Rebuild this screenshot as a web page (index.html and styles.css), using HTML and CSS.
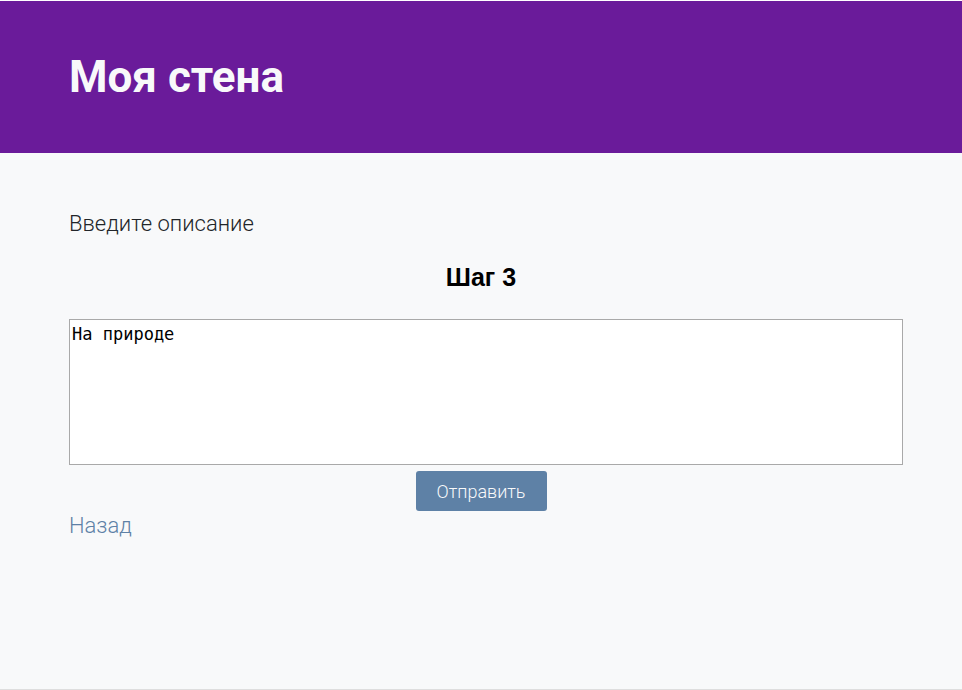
FILE: index.html
```html
<!DOCTYPE html>
<html lang="ru">
<head>
<meta charset="utf-8">
<title>Моя стена</title>
<link rel="stylesheet" href="styles.css">
</head>
<body>
<header class="header">
  <h1 class="title">Моя стена</h1>
</header>
<main class="main">
  <p class="label">Введите описание</p>
  <h2 class="step">Шаг 3</h2>
  <form class="form">
    <textarea class="area">На природе</textarea>
    <button type="button" class="send">Отправить</button>
  </form>
  <a class="back" href="#">Назад</a>
</main>
</body>
</html>
```

FILE: styles.css
```css
html, body {
  margin: 0;
  padding: 0;
  height: 100%;
}
body {
  background: #f8f9fa;
  font-family: Roboto, "Noto Sans", sans-serif;
  color: #212529;
  box-sizing: border-box;
  border-top: 1px solid #ffffff;
  border-bottom: 1px solid #dedede;
  display: flex;
  flex-direction: column;
}
.header {
  background: #6a1b9a;
  height: 152px;
  display: flex;
  align-items: center;
  padding: 0 69px;
}
.title {
  margin: 0;
  color: #f8f9fa;
  font-size: 44px;
  font-weight: 700;
  line-height: 1;
}
.main {
  flex: 1;
  padding: 0 59px 0 69px;
  display: flex;
  flex-direction: column;
}
.label {
  margin: 56px 0 0;
  font-size: 22px;
  font-weight: 300;
  line-height: 30px;
}
.step {
  margin: 24px -59px 0 -69px;
  text-align: center;
  font-family: "Liberation Sans", Arial, sans-serif;
  font-size: 25px;
  font-weight: 700;
  line-height: 28px;
  color: #000;
}
.form {
  margin-top: 28px;
  display: flex;
  flex-direction: column;
  align-items: center;
}
.area {
  box-sizing: border-box;
  width: 834px;
  align-self: flex-start;
  height: 146px;
  margin: 0;
  padding: 2px;
  border: 1px solid #a9a9a9;
  background: #fff;
  font-family: "DejaVu Sans Mono", monospace;
  font-size: 17px;
  line-height: 1.5;
  color: #000;
  resize: none;
}
.send {
  margin: 6px 0 0;
  width: 131px;
  height: 40px;
  background: #5e81a6;
  color: #f8f9fa;
  border: 0;
  border-radius: 3px;
  font-family: Roboto, sans-serif;
  font-weight: 300;
  font-size: 18px;
  position: relative;
  left: -5px;
}
.back {
  margin-top: 1px;
  align-self: flex-start;
  color: #5e81a6;
  text-decoration: none;
  font-size: 22px;
  font-weight: 300;
  line-height: 28px;
}
```
